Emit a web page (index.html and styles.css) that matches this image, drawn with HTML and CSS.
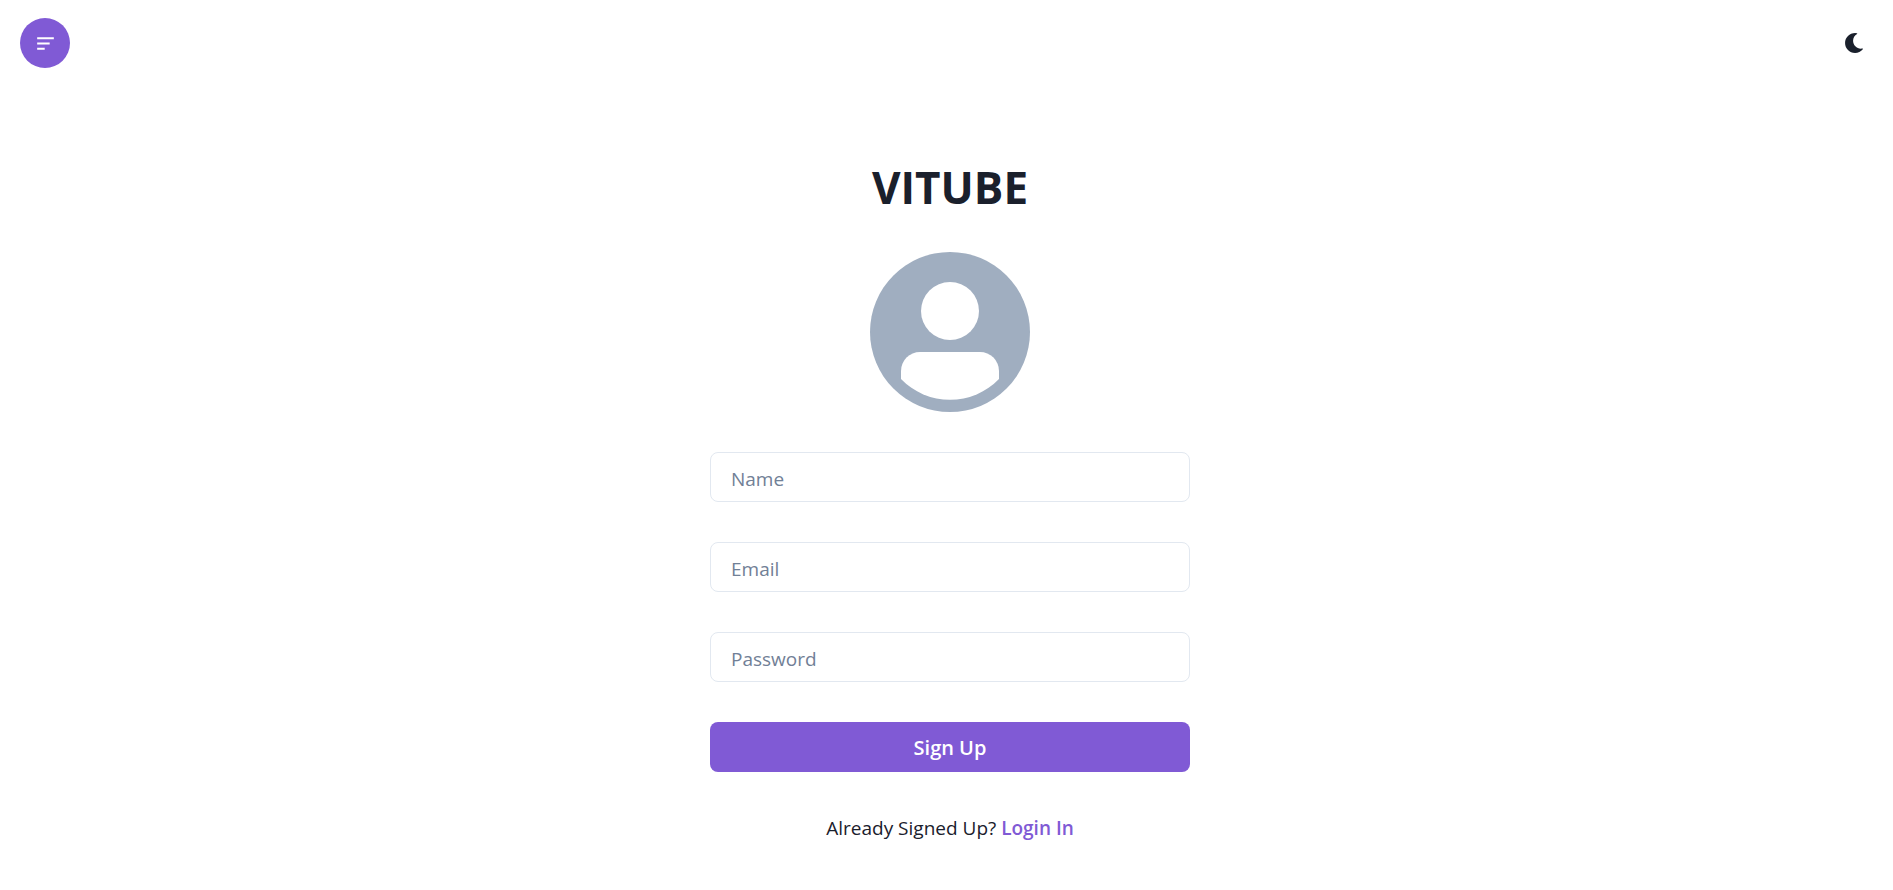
FILE: index.html
```html
<!DOCTYPE html>
<html lang="en">
<head>
<meta charset="utf-8">
<meta name="viewport" content="width=device-width, initial-scale=1">
<title>VITUBE</title>
<link rel="stylesheet" href="styles.css">
</head>
<body>
<header class="topbar">
  <button class="icon-button menu-button" type="button" aria-label="Open menu">
    <svg class="menu-icon" viewBox="0 0 24 24" aria-hidden="true"><path d="M4 11h12v2H4zm0-5h16v2H4zm0 12h7.235v-2H4z"/></svg>
  </button>
  <button class="icon-button theme-button" type="button" aria-label="Switch to dark mode">
    <svg class="moon-icon" viewBox="0 0 512 512" aria-hidden="true"><path d="M283.211 512c78.962 0 151.079-35.925 198.857-94.792 7.068-8.708-.639-21.43-11.562-19.35-124.203 23.654-238.262-71.576-238.262-196.954 0-72.222 38.662-138.635 101.498-174.394 9.686-5.512 7.25-20.197-3.756-22.23A258.156 258.156 0 0 0 283.211 0c-141.309 0-256 114.511-256 256 0 141.309 114.511 256 256 256z"/></svg>
  </button>
</header>
<main class="page">
  <form class="signup">
    <h1 class="title">VITUBE</h1>
    <svg class="avatar" viewBox="0 0 160 160" role="img" aria-label="Profile picture">
      <circle class="avatar-ground" cx="80" cy="80" r="80"/>
      <circle class="avatar-figure" cx="80" cy="59" r="29"/>
      <path class="avatar-figure" d="M31 127v-8a19 19 0 0 1 19-19h60a19 19 0 0 1 19 19v8a68 68 0 0 1-98 0z"/>
    </svg>
    <input class="field" type="text" placeholder="Name" aria-label="Name">
    <input class="field" type="email" placeholder="Email" aria-label="Email">
    <input class="field" type="password" placeholder="Password" aria-label="Password">
    <button class="submit" type="submit">Sign Up</button>
    <p class="note">Already Signed Up? <a class="link" href="#login">Login In</a></p>
  </form>
</main>
</body>
</html>
```
FILE: styles.css
```css
* {
  box-sizing: border-box;
}

body {
  margin: 0;
  background: #fff;
  color: #1a202c;
  font-family: "Segoe UI", "Open Sans", sans-serif;
  font-size: 19px;
  line-height: 32px;
}

.topbar {
  display: flex;
  justify-content: space-between;
  padding: 18px 14px 0 20px;
}

.icon-button {
  display: flex;
  align-items: center;
  justify-content: center;
  width: 50px;
  height: 50px;
  padding: 0;
  border: 0;
  border-radius: 50%;
  background: transparent;
  color: #1a202c;
  cursor: pointer;
}

.menu-button {
  background: #805ad5;
  color: #fff;
}

.menu-icon {
  width: 25px;
  height: 25px;
  fill: currentColor;
}

.moon-icon {
  width: 20px;
  height: 20px;
  fill: currentColor;
}

.page {
  display: flex;
  justify-content: center;
  padding: 94px 20px 30px 27px;
}

.signup {
  display: flex;
  flex-direction: column;
  align-items: center;
  gap: 40px;
  width: 100%;
  max-width: 480px;
}

.title {
  margin: 0;
  font-size: 44px;
  font-weight: 700;
  line-height: 50px;
}

.avatar {
  width: 160px;
  height: 160px;
}

.avatar-ground {
  fill: #a0aec0;
}

.avatar-figure {
  fill: #fff;
}

.field {
  width: 100%;
  height: 50px;
  padding: 4px 20px 0;
  border: 1px solid #e2e8f0;
  border-radius: 8px;
  background: #fff;
  color: inherit;
  font: inherit;
}

.field::placeholder {
  color: #718096;
  opacity: 1;
}

.submit {
  width: 100%;
  height: 50px;
  padding: 2px 0 0;
  border: 0;
  border-radius: 8px;
  background: #805ad5;
  color: #fff;
  font: inherit;
  font-size: 20px;
  font-weight: 600;
  cursor: pointer;
}

.note {
  margin: 0;
}

.link {
  color: #805ad5;
  font-weight: 600;
  text-decoration: none;
}
```
